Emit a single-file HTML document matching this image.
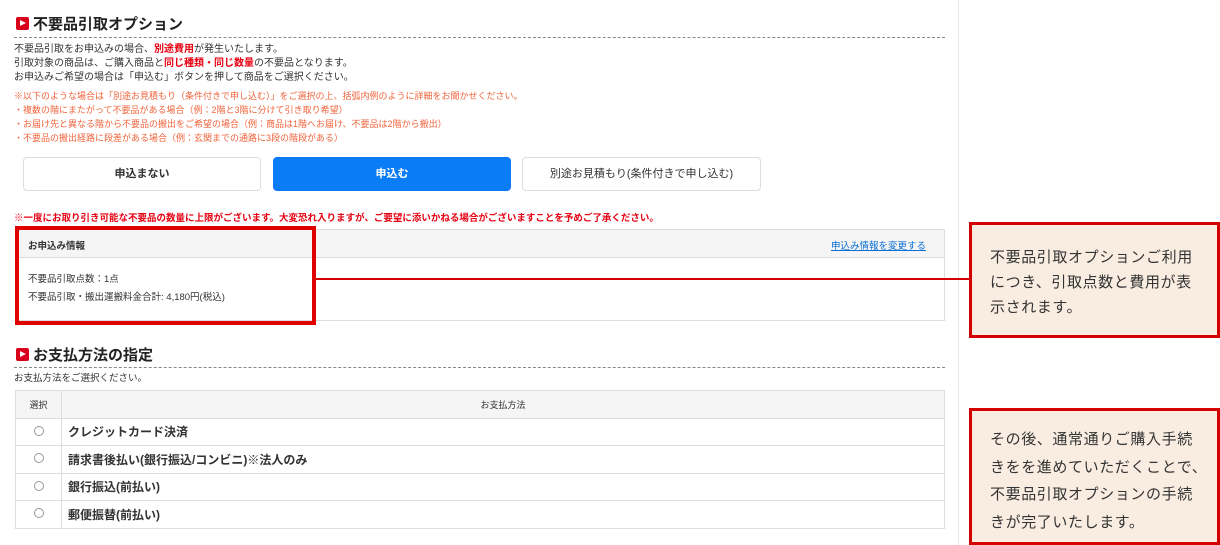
<!DOCTYPE html>
<html><head><meta charset="utf-8"><style>
*{margin:0;padding:0;box-sizing:border-box}
body{width:1220px;height:545px;background:#fff;font-family:"Liberation Sans","Noto Sans CJK JP",sans-serif;color:#333;position:relative;overflow:hidden}
.abs{position:absolute}
.panel{left:0;top:0;width:959px;height:545px;border-right:1px solid #e6e6e6}
.h{font-size:15px;font-weight:bold;color:#222;white-space:nowrap}
.ic{display:inline-block;width:13px;height:13px;background:#d9001b;border-radius:2px;position:relative;vertical-align:-1px;margin-right:4px}
.ic:after{content:"";position:absolute;left:4px;top:3px;border-left:6px solid #fff;border-top:3.5px solid transparent;border-bottom:3.5px solid transparent}
.dot{left:14px;width:931px;border-top:1px dashed #888}
.t{font-size:10px;line-height:14px;white-space:nowrap}
.o{font-size:9px;line-height:14px;color:#f0643c;white-space:nowrap}
.r{color:#e60012;font-weight:bold}
.btn{height:34px;border:1px solid #ddd;border-radius:4px;font-size:11px;font-weight:bold;text-align:center;line-height:32px;background:#fff;color:#333}
.call{background:#f9ede2;border:3px solid #d40000;font-size:15px;letter-spacing:0.6px;color:#333;padding:0 0 0 18px;white-space:nowrap}
table{border-collapse:collapse}
td{border:1px solid #ddd;height:27.5px;font-size:12px;font-weight:bold}
</style></head><body>
<div class="abs panel"></div>
<div class="abs h" style="left:16px;top:13px"><span class="ic"></span>不要品引取オプション</div>
<div class="abs dot" style="top:37px"></div>
<div class="abs t" style="left:14px;top:43px">不要品引取をお申込みの場合、<span class="r">別途費用</span>が発生いたします。<br>引取対象の商品は、ご購入商品と<span class="r">同じ種類・同じ数量</span>の不要品となります。<br>お申込みご希望の場合は「申込む」ボタンを押して商品をご選択ください。</div>
<div class="abs o" style="left:14px;top:89px">※以下のような場合は「別途お見積もり（条件付きで申し込む）」をご選択の上、括弧内例のように詳細をお聞かせください。<br>・複数の階にまたがって不要品がある場合（例：2階と3階に分けて引き取り希望）<br>・お届け先と異なる階から不要品の搬出をご希望の場合（例：商品は1階へお届け、不要品は2階から搬出）<br>・不要品の搬出経路に段差がある場合（例：玄関までの通路に3段の階段がある）</div>
<div class="abs btn" style="left:23px;top:157px;width:238px">申込まない</div>
<div class="abs btn" style="left:273px;top:157px;width:238px;background:#0a7cf5;border-color:#0a7cf5;color:#fff">申込む</div>
<div class="abs btn" style="left:522px;top:157px;width:239px;font-weight:normal">別途お見積もり(条件付きで申し込む)</div>
<div class="abs" style="left:14px;top:210px;font-size:9.5px;font-weight:bold;color:#e60012;white-space:nowrap">※一度にお取り引き可能な不要品の数量に上限がございます。大変恐れ入りますが、ご要望に添いかねる場合がございますことを予めご了承ください。</div>
<div class="abs" style="left:15px;top:229px;width:930px;height:92px;border:1px solid #ddd">
<div style="height:28px;background:#f5f5f5;border-bottom:1px solid #ddd;font-size:9.5px;font-weight:bold;padding:8px 0 0 12px">お申込み情報<span style="position:absolute;right:18px;top:8px;color:#0a6fd6;text-decoration:underline;font-weight:normal">申込み情報を変更する</span></div>
<div style="font-size:9.5px;line-height:18px;padding:13px 0 0 12px">不要品引取点数：1点<br>不要品引取・搬出運搬料金合計: 4,180円(税込)</div>
</div>
<div class="abs" style="left:15px;top:226px;width:301px;height:99px;border:4px solid #e00000"></div>
<div class="abs" style="left:315px;top:278px;width:656px;height:2px;background:#d40000"></div>
<div class="abs call" style="left:969px;top:222px;width:251px;height:116px;line-height:25px;padding-top:20px">不要品引取オプションご利用<br>につき、引取点数と費用が表<br>示されます。</div>
<div class="abs call" style="left:969px;top:408px;width:251px;height:137px;line-height:27.5px;padding-top:15px">その後、通常通りご購入手続<br>きをを進めていただくことで、<br>不要品引取オプションの手続<br>きが完了いたします。</div>
<div class="abs h" style="left:16px;top:344px"><span class="ic"></span>お支払方法の指定</div>
<div class="abs dot" style="top:367px"></div>
<div class="abs t" style="left:14px;top:372px;font-size:9.5px">お支払方法をご選択ください。</div>
<table class="abs" style="left:15px;top:390px;width:930px">
<tr><td style="width:46px;background:#f5f5f5;text-align:center;font-size:9px;font-weight:normal">選択</td><td style="background:#f5f5f5;text-align:center;font-size:9px;font-weight:normal">お支払方法</td></tr>
<tr><td style="text-align:center"><span style="display:inline-block;width:10px;height:10px;border:1px solid #999;border-radius:50%"></span></td><td style="padding-left:6px">クレジットカード決済</td></tr>
<tr><td style="text-align:center"><span style="display:inline-block;width:10px;height:10px;border:1px solid #999;border-radius:50%"></span></td><td style="padding-left:6px">請求書後払い(銀行振込/コンビニ)※法人のみ</td></tr>
<tr><td style="text-align:center"><span style="display:inline-block;width:10px;height:10px;border:1px solid #999;border-radius:50%"></span></td><td style="padding-left:6px">銀行振込(前払い)</td></tr>
<tr><td style="text-align:center"><span style="display:inline-block;width:10px;height:10px;border:1px solid #999;border-radius:50%"></span></td><td style="padding-left:6px">郵便振替(前払い)</td></tr>
</table>
</body></html>
